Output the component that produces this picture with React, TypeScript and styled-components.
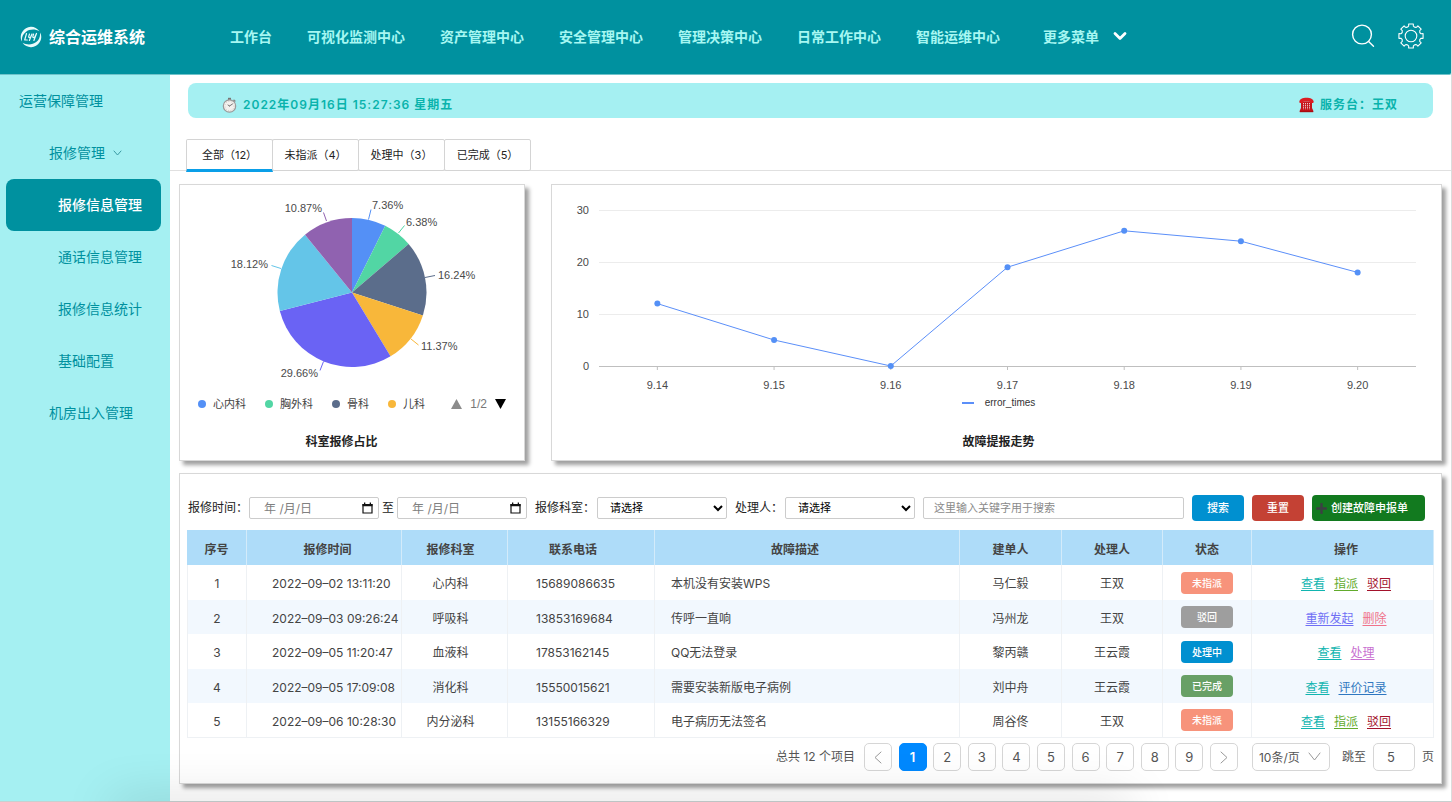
import React from 'react';
import styled, { createGlobalStyle, css } from 'styled-components';

const teal = '#00919f';
const aqua = '#a5f0f2';
const sans = 'Inter, "Noto Sans CJK SC", sans-serif';
const chartFont = '"Liberation Sans", "Noto Sans CJK SC", sans-serif';

const GlobalStyle = createGlobalStyle`
  *, *::before, *::after { box-sizing: border-box; }
  body { margin: 0; background: #fff; color: #333; font: 12px/18px ${sans}; }
  button, input, select { font-family: inherit; margin: 0; }
  ul { list-style: none; margin: 0; padding: 0; }
  a { color: inherit; text-decoration: none; }
`;

/* ---------- shell ---------- */

const Shell = styled.div`
  display: flex;
  flex-direction: column;
  min-height: 100vh;
  border-right: 1px solid #dcdcdc;
  border-bottom: 1px solid #c8d0d0;
`;

const Header = styled.header`
  display: flex;
  align-items: center;
  height: 75px;
  padding: 0 27px 0 20px;
  background: ${teal};
  border-bottom: 1px solid #6fc3ca;
  border-bottom-right-radius: 2px;
`;

const Brand = styled.a`
  display: flex;
  align-items: center;
  gap: 7px;
  width: 210px;
  flex: none;
  color: #fff;
  font-size: 16px;
  font-weight: 700;
  line-height: 24px;
`;

const Nav = styled.nav`
  display: flex;
  align-items: center;
  gap: 35px;
  flex: 1;
  font-size: 14px;
  font-weight: 700;
  line-height: 20px;
  color: #a6f7f2;
  white-space: nowrap;
`;

const MoreButton = styled.button`
  display: flex;
  align-items: center;
  gap: 13px;
  margin-left: 8px;
  padding: 0;
  border: 0;
  background: none;
  color: inherit;
  font-size: 14px;
  font-weight: 700;
  line-height: 20px;
`;

const HeaderTools = styled.div`
  display: flex;
  align-items: center;
  gap: 23px;
  padding-bottom: 3px;
`;

const IconButton = styled.button`
  display: flex;
  padding: 0;
  border: 0;
  background: none;
  color: #fff;
`;

const Body = styled.div`
  display: flex;
  flex: 1;
`;

const Sidebar = styled.aside`
  width: 170px;
  flex: none;
  background: ${aqua};
`;

const SideLink = styled.a<{ $indent: number; $active?: boolean }>`
  display: flex;
  align-items: center;
  gap: 8px;
  height: 52px;
  margin: 0 9px 0 6px;
  padding-left: ${p => p.$indent}px;
  border-radius: 8px;
  color: ${teal};
  font-size: 14px;
  line-height: 20px;
  ${p => p.$active && css`
    background: ${teal};
    color: #fff;
    font-weight: 500;
  `}
`;

const Main = styled.main`
  flex: 1;
  min-width: 0;
  padding: 8px 0 17px;
`;

/* ---------- notice strip and tabs ---------- */

const Notice = styled.div`
  display: flex;
  justify-content: space-between;
  align-items: center;
  height: 35px;
  margin: 0 18px;
  padding: 8px 35px 0 34px;
  border-radius: 8px;
  background: ${aqua};
  color: #0ab3ac;
  font-weight: 600;
  letter-spacing: 1px;
`;

const NoticeItem = styled.span`
  display: flex;
  align-items: center;
  gap: 6px;
`;

const Tabs = styled.div`
  display: flex;
  margin-top: 21px;
  padding-left: 16px;
  border-bottom: 1px solid #e0e0e0;
`;

const Tab = styled.button<{ $active?: boolean }>`
  width: 87px;
  height: 32px;
  margin: 0 -1px -1px 0;
  padding: 0 0 1px;
  border: 1px solid #d4d4d4;
  border-radius: 2px;
  background: #fff;
  color: #222;
  font-size: 11px;
  line-height: 16px;
  ${p => p.$active && css`
    border-bottom: 3px solid #0a9fe8;
    border-bottom-left-radius: 0;
    border-bottom-right-radius: 0;
    padding: 0;
    height: 33px;
    margin-bottom: -2px;
  `}
`;

/* ---------- cards ---------- */

const Card = styled.section`
  border: 1px solid #d8d8d8;
  background: #fff;
  box-shadow: 4px 4px 4px #a0a0a0;
`;

const ChartRow = styled.div`
  display: flex;
  gap: 26px;
  margin: 13px 9px 12px;
`;

const PieCard = styled(Card)`
  width: 346px;
  flex: none;
  padding-bottom: 9px;
`;

const TrendCard = styled(Card)`
  flex: 1;
  min-width: 0;
  padding-bottom: 9px;
`;

const Drawing = styled.svg`
  display: block;
  width: 100%;
  font-family: ${chartFont};
  font-size: 11px;
  fill: #4a4a4a;
`;

const PieLegend = styled.div`
  display: flex;
  align-items: center;
  justify-content: space-between;
  height: 26px;
  padding: 0 18px;
  font: 11px/16px ${chartFont};
  color: #444;
`;

const LegendKeys = styled.ul`
  display: flex;
  gap: 19px;
`;

const LegendKey = styled.li`
  display: flex;
  align-items: center;
  gap: 7px;
`;

const Dot = styled.i<{ $color: string }>`
  width: 8px;
  height: 8px;
  border-radius: 50%;
  background: ${p => p.$color};
`;

const LegendPager = styled.div`
  display: flex;
  align-items: center;
  gap: 8px;
  font-size: 12px;
  color: #777;
`;

const TrendLegend = styled.div`
  display: flex;
  align-items: center;
  justify-content: center;
  gap: 11px;
  height: 26px;
  padding: 0 0 3px 4px;
  font: 10px/16px ${chartFont};
  color: #333;
`;

const LineKey = styled.i`
  width: 12px;
  height: 2px;
  background: #5b8ff9;
`;

const ChartTitle = styled.h2<{ $before?: number; $after?: number }>`
  margin: 16px 0 0;
  padding-left: ${p => p.$before ?? 0}px;
  padding-right: ${p => p.$after ?? 0}px;
  text-align: center;
  font-size: 12px;
  font-weight: 700;
  line-height: 18px;
  color: #222;
`;

/* ---------- record list ---------- */

const ListCard = styled(Card)`
  margin: 0 9px;
  padding: 21px 7px 12px;
`;

const Filters = styled.form`
  display: flex;
  align-items: center;
  gap: 8px;
  margin-bottom: 9px;
  padding: 0 9px 0 1px;
`;

const Field = styled.div<{ $gap: number }>`
  display: flex;
  align-items: center;
  gap: ${p => p.$gap}px;
  white-space: nowrap;
  color: #222;
`;

const control = css`
  height: 22px;
  border: 1px solid #ccc;
  border-radius: 2px;
  background: #fff;
  font-size: 11px;
  &::placeholder { color: #8a8a8a; opacity: 1; }
`;

const DateBox = styled.span`
  ${control}
  display: flex;
  align-items: center;
  width: 130px;
  padding-right: 5px;
`;

const DateInput = styled.input`
  flex: 1;
  min-width: 0;
  height: 18px;
  padding: 0 0 0 14px;
  border: 0;
  outline: 0;
  background: none;
  font-size: 12px;
  &::placeholder { color: #808080; opacity: 1; }
`;

const SelectBox = styled.select`
  ${control}
  width: 130px;
  padding: 0 0 0 8px;
  color: #000;
`;

const Keyword = styled.input`
  ${control}
  flex: 1;
  min-width: 0;
  padding: 0 10px;
`;

const ActionButton = styled.button<{ $color: string; $wide?: boolean }>`
  display: flex;
  align-items: center;
  justify-content: ${p => (p.$wide ? 'flex-start' : 'center')};
  gap: 4px;
  width: ${p => (p.$wide ? 113 : 52)}px;
  height: 26px;
  padding: ${p => (p.$wide ? '0 0 0 4px' : '0')};
  flex: none;
  border: 0;
  border-radius: 4px;
  background: ${p => p.$color};
  color: #fff;
  font-size: 11px;
  font-weight: 500;
  line-height: 16px;
`;

const Table = styled.table`
  width: 100%;
  table-layout: fixed;
  border-collapse: separate;
  border-spacing: 0;
  color: #444;
`;

type CellProps = { $align?: 'left' | 'center'; $before?: number; $after?: number; $top?: number };

const cell = css<CellProps>`
  padding: ${p => p.$top ?? 3}px ${p => p.$after ?? 0}px 0 ${p => p.$before ?? 0}px;
  text-align: ${p => p.$align ?? 'center'};
  vertical-align: middle;
  white-space: nowrap;
  border-right: 1px solid #eef1f4;
`;

const Th = styled.th<CellProps>`
  ${cell}
  height: 35px;
  background: #aedcf9;
  border-right-color: #d3ebfa;
  font-weight: 700;
`;

const Td = styled.td<CellProps>`
  ${cell}
  &:first-child { border-left: 1px solid #eef1f4; }
`;

const Row = styled.tr`
  height: 35px;
  &:nth-child(even) { height: 34px; background: #f2f8fe; }
  &:last-child td { border-bottom: 1px solid #eef1f4; }
`;

const Badge = styled.span<{ $color: string }>`
  display: block;
  width: 52px;
  height: 22px;
  margin: 0 auto;
  border-radius: 4px;
  background: ${p => p.$color};
  color: #fff;
  font-size: 10px;
  font-weight: 500;
  line-height: 22px;
`;

const Links = styled.div`
  display: flex;
  justify-content: center;
  gap: 9px;
`;

const OpLink = styled.a<{ $color: string }>`
  color: ${p => p.$color};
  text-decoration: underline;
  text-underline-offset: 2px;
`;

const Pagination = styled.div`
  display: flex;
  align-items: center;
  justify-content: flex-end;
  gap: 7px;
  margin-top: 5px;
  color: #555;
`;

const Total = styled.span`
  margin-right: 2px;
`;

const PageList = styled.ul`
  display: flex;
  justify-content: space-between;
  width: 374px;
`;

const PageButton = styled.button<{ $current?: boolean }>`
  display: flex;
  align-items: center;
  justify-content: center;
  width: 28px;
  height: 28px;
  padding: 0;
  border: 1px solid ${p => (p.$current ? '#0089ff' : '#d6d6d6')};
  border-radius: 5px;
  background: ${p => (p.$current ? '#0089ff' : '#fff')};
  color: ${p => (p.$current ? '#fff' : '#555')};
  font-size: 13px;
  font-weight: ${p => (p.$current ? 600 : 400)};
`;

const PageSize = styled.span`
  position: relative;
  display: flex;
  margin: 0 5px 0 7px;
  svg { position: absolute; right: 9px; top: 9px; pointer-events: none; }
`;

const PageSizeSelect = styled.select`
  appearance: none;
  width: 78px;
  height: 28px;
  padding: 0 6px;
  border: 1px solid #d6d6d6;
  border-radius: 5px;
  background: #fff;
  color: #555;
  font-size: 12px;
`;

const PageInput = styled.input`
  width: 42px;
  height: 28px;
  padding: 0 6px 0 0;
  border: 1px solid #d6d6d6;
  border-radius: 5px;
  color: #555;
  font-size: 13px;
  text-align: center;
`;

const BottomShade = styled.div`
  position: fixed;
  left: 110px;
  right: 320px;
  bottom: -20px;
  height: 20px;
  pointer-events: none;
  box-shadow: 0 0 50px rgba(0, 0, 0, 0.2);
`;

/* ---------- icons ---------- */

const Logo = () => (
  <svg width="22" height="22" viewBox="0 0 22 22" fill="none" aria-hidden="true">
    <path d="M19.5 5.2A10.2 10.2 0 0 0 2.4 5.8C.2 9 .3 13 2 15.6c-.4-3.9.6-7.4 3.8-9.7C9.5 3.1 15 2.8 19.5 5.2z" fill="#e9fbfb" />
    <path d="M2.5 16.8a10.2 10.2 0 0 0 17.1-.6c2.2-3.2 2.1-7.2.4-9.8.4 3.9-.6 7.4-3.8 9.7-3.7 2.8-9.2 3.1-13.7.7z" fill="#e9fbfb" />
    <path d="M6.5 7.500L4.7 14h2.600M9.500 8l-.8 2.600c-.2 1.300 1.400 1.200 2 .2L12 8l-2.600 6.500M13.600 8l-.8 2.600c-.2 1.300 1.400 1.200 2 .2L16.500 7.500l-2.600 7" stroke="#e9fbfb" strokeWidth="1.2" strokeLinecap="round" strokeLinejoin="round" />
  </svg>
);

const SearchIcon = () => (
  <svg width="24" height="24" viewBox="0 0 24 24" fill="none" stroke="currentColor" strokeWidth="1.4" strokeLinecap="round" aria-hidden="true">
    <circle cx="11" cy="10.5" r="9.4" />
    <path d="M17.6 17.4L22.5 22.300" />
  </svg>
);

const gearPath = (() => {
  const at = (deg: number, r: number) => {
    const a = (deg * Math.PI) / 180;
    return `${(13 + r * Math.sin(a)).toFixed(2)} ${(13 - r * Math.cos(a)).toFixed(2)}`;
  };
  let d = '';
  for (let k = 0; k < 8; k++) {
    const a = k * 45;
    d += `${k ? 'L' : 'M'}${at(a - 11, 12.3)} L${at(a + 11, 12.3)} L${at(a + 13, 10.3)} Q${at(a + 22.5, 8.9)} ${at(a + 32, 10.3)} `;
  }
  return d + 'Z';
})();

const GearIcon = () => (
  <svg width="26" height="26" viewBox="0 0 26 26" fill="none" stroke="currentColor" strokeWidth="1.1" strokeLinejoin="round" aria-hidden="true">
    <path d={gearPath} />
    <circle cx="13" cy="13" r="5.8" />
  </svg>
);

const MenuArrow = () => (
  <svg width="16" height="12" viewBox="0 0 16 12" fill="none" aria-hidden="true">
    <path d="M3 2.500L8 7.500L13 2.500" stroke="#fff" strokeWidth="2.8" strokeLinecap="round" strokeLinejoin="round" />
  </svg>
);

const chevronShape = {
  down: (w: number, h: number) => `M1 1L${w / 2} ${h - 1}L${w - 1} 1`,
  left: (w: number, h: number) => `M${w - 1} 1L1 ${h / 2}L${w - 1} ${h - 1}`,
  right: (w: number, h: number) => `M1 1L${w - 1} ${h / 2}L1 ${h - 1}`,
};

const Chevron = ({ dir = 'down', w, h, color = '#999' }: { dir?: keyof typeof chevronShape; w: number; h: number; color?: string }) => (
  <svg width={w} height={h} viewBox={`0 0 ${w} ${h}`} fill="none" aria-hidden="true">
    <path d={chevronShape[dir](w, h)} stroke={color} strokeLinecap="round" strokeLinejoin="round" />
  </svg>
);

const StopwatchIcon = () => (
  <svg width="15" height="16" viewBox="0 0 15 16" aria-hidden="true">
    <path d="M6 .8h3v2.500H6z" fill="#777" />
    <path d="M12 2.300l1.800 1.800-1.200 1.200L11 3.500z" fill="#888" />
    <circle cx="7.5" cy="9" r="6.2" fill="#f3f1ee" stroke="#9a9a9a" strokeWidth="1.2" />
    <circle cx="7.5" cy="9" r="4.6" fill="none" stroke="#cfcac4" strokeWidth="1" strokeDasharray="1 1.5" />
    <path d="M7.500 9l3-2M7.500 9L6 8" stroke="#777" strokeWidth="1" strokeLinecap="round" />
  </svg>
);

const PhoneIcon = () => (
  <svg width="15" height="16" viewBox="0 0 15 16" aria-hidden="true">
    <path d="M2 5h11v6l1.200 2.500V15H.8v-1.500L2 11z" fill="#c4151b" />
    <path d="M.3 4.800C.6 2 3.500.8 7.500.8s6.900 1.200 7.200 4c0 .8-.5 1.200-1.300 1.200h-1.700c-.8 0-1.200-.4-1.200-1.200H4.500C4.500 5.600 4.100 6 3.300 6H1.600C.8 6 .3 5.600.3 4.800z" fill="#dc1c22" />
    <path d="M4.500 6v6.500M6.500 6v6.500M8.500 6v6.500M10.500 6v6.500" stroke="#efc9ca" strokeWidth="1" strokeDasharray="1.300 .8" />
    <path d="M.8 13.800h13.400v1.400H.8z" fill="#a80d12" />
  </svg>
);

const CalendarIcon = () => (
  <svg width="11" height="12" viewBox="0 0 11 12" aria-hidden="true">
    <path d="M1 2.500h9v8.500H1z" fill="none" stroke="#111" strokeWidth="1.2" />
    <path d="M.5 2h10v2.300H.5zM2 .5h1.300V2H2zM7.700.5H9V2H7.700z" fill="#111" />
  </svg>
);

const PlusIcon = () => (
  <svg width="11" height="11" viewBox="0 0 11 11" aria-hidden="true">
    <path d="M5.500 1v9M1 5.500h9" stroke="#3c4043" strokeWidth="2.4" strokeLinecap="round" />
  </svg>
);

/* ---------- charts ---------- */

const slices = [
  { value: 7.36, color: '#5490f6', x: 192, y: 24, anchor: 'start', line: '188.5,34.5 191,24.5' },
  { value: 6.38, color: '#52d6a4', x: 226, y: 41, anchor: 'start', line: '218.5,48 224.5,40.5' },
  { value: 16.24, color: '#5b6d8b', x: 258, y: 94, anchor: 'start', line: '245,92.5 255,90.5' },
  { value: 11.37, color: '#f8b73a', x: 241, y: 165, anchor: 'start', line: '231,154 238.5,160' },
  { value: 29.66, color: '#6a63f4', x: 138, y: 192, anchor: 'end', line: '143.5,176.5 140,185.5' },
  { value: 18.12, color: '#64c5e8', x: 88, y: 83, anchor: 'end', line: '101,83.5 91.5,80.5' },
  { value: 10.87, color: '#9062b0', x: 142, y: 27, anchor: 'end', line: '146.5,36 143.5,27.5' },
] as const;

const PieChart = () => {
  const cx = 172;
  const cy = 107.5;
  const r = 74.5;
  let sum = 0;
  const point = (v: number) => {
    const a = (v / 100) * 2 * Math.PI;
    return `${(cx + r * Math.sin(a)).toFixed(2)} ${(cy - r * Math.cos(a)).toFixed(2)}`;
  };
  return (
    <Drawing viewBox="0 0 344 206" role="img" aria-label="科室报修占比">
      {slices.map(s => {
        const from = point(sum);
        sum += s.value;
        return (
          <g key={s.value}>
            <path d={`M${cx} ${cy} L${from} A${r} ${r} 0 0 1 ${point(sum)} Z`} fill={s.color} />
            <polyline points={s.line} stroke={s.color} fill="none" />
            <text x={s.x} y={s.y} textAnchor={s.anchor}>{s.value}%</text>
          </g>
        );
      })}
    </Drawing>
  );
};

const trend = [
  ['9.14', 12], ['9.15', 5], ['9.16', 0], ['9.17', 19], ['9.18', 26], ['9.19', 24], ['9.20', 18],
] as const;

const TrendChart = () => {
  const left = 47;
  const right = 864;
  const step = (right - left) / trend.length;
  const px = (i: number) => left + step * (i + 0.5);
  const py = (v: number) => 181 - v * 5.2;
  return (
    <Drawing viewBox="0 0 889 206" role="img" aria-label="故障提报走势">
      {[30, 20, 10, 0].map(v => (
        <g key={v}>
          <line x1={left} x2={right} y1={py(v) + 0.5} y2={py(v) + 0.5} stroke={v ? '#ececec' : '#bfbfbf'} />
          <text x="37" y={py(v) + 4} textAnchor="end">{v}</text>
        </g>
      ))}
      {trend.map(([day], i) => (
        <g key={day}>
          <line x1={px(i)} x2={px(i)} y1="181" y2="185" stroke="#bfbfbf" />
          <text x={px(i)} y="204" textAnchor="middle">{day}</text>
        </g>
      ))}
      <polyline points={trend.map(([, v], i) => `${px(i)},${py(v)}`).join(' ')} fill="none" stroke="#5b8ff9" />
      {trend.map(([day, v], i) => (
        <circle key={day} cx={px(i)} cy={py(v)} r="3" fill="#5490f6" />
      ))}
    </Drawing>
  );
};

/* ---------- data ---------- */

const navItems = ['工作台', '可视化监测中心', '资产管理中心', '安全管理中心', '管理决策中心', '日常工作中心', '智能运维中心'];

const legend = [
  ['心内科', '#5490f6'], ['胸外科', '#52d6a4'], ['骨科', '#5b6d8b'], ['儿科', '#f8b73a'],
] as const;

const columns = [
  { name: '序号', width: 60 },
  { name: '报修时间', width: 155, before: 7 },
  { name: '报修科室', width: 106, after: 8 },
  { name: '联系电话', width: 147, after: 16 },
  { name: '故障描述', after: 24 },
  { name: '建单人', width: 102 },
  { name: '处理人', width: 101 },
  { name: '状态', width: 89 },
  { name: '操作', width: 182, before: 7 },
] as { name: string; width?: number; before?: number; after?: number }[];

const statusColor: Record<string, string> = {
  未指派: '#f7937b', 驳回: '#9e9e9e', 处理中: '#0090d0', 已完成: '#68a066',
};

const opColor: Record<string, string> = {
  查看: '#11b5b0', 指派: '#62ab2c', 驳回: '#a3122b', 重新发起: '#6f6ff5', 删除: '#f0728a', 处理: '#c86fd0', 评价记录: '#2f77c0',
};

const records = [
  ['2022–09–02 13:11:20', '心内科', '15689086635', '本机没有安装WPS', '马仁毅', '王双', '未指派', '查看 指派 驳回'],
  ['2022–09–03 09:26:24', '呼吸科', '13853169684', '传呼一直响', '冯州龙', '王双', '驳回', '重新发起 删除'],
  ['2022–09–05 11:20:47', '血液科', '17853162145', 'QQ无法登录', '黎丙赣', '王云霞', '处理中', '查看 处理'],
  ['2022–09–05 17:09:08', '消化科', '15550015621', '需要安装新版电子病例', '刘中舟', '王云霞', '已完成', '查看 评价记录'],
  ['2022–09–06 10:28:30', '内分泌科', '13155166329', '电子病历无法签名', '周谷佟', '王双', '未指派', '查看 指派 驳回'],
];

export default function App() {
  return (
    <>
      <GlobalStyle />
      <Shell>
        <Header>
          <Brand href="#"><Logo />综合运维系统</Brand>
          <Nav>
            {navItems.map(n => <a key={n} href="#">{n}</a>)}
            <MoreButton type="button">更多菜单<MenuArrow /></MoreButton>
          </Nav>
          <HeaderTools>
            <IconButton type="button" aria-label="搜索"><SearchIcon /></IconButton>
            <IconButton type="button" aria-label="设置"><GearIcon /></IconButton>
          </HeaderTools>
        </Header>
        <Body>
          <Sidebar>
            <SideLink href="#" $indent={13}>运营保障管理</SideLink>
            <SideLink href="#" $indent={43}>报修管理<Chevron w={9} h={6} color="#3a9aa3" /></SideLink>
            <SideLink href="#" $indent={52} $active>报修信息管理</SideLink>
            <SideLink href="#" $indent={52}>通话信息管理</SideLink>
            <SideLink href="#" $indent={52}>报修信息统计</SideLink>
            <SideLink href="#" $indent={52}>基础配置</SideLink>
            <SideLink href="#" $indent={43}>机房出入管理</SideLink>
          </Sidebar>
          <Main>
            <Notice>
              <NoticeItem><StopwatchIcon />2022年09月16日 15:27:36 星期五</NoticeItem>
              <NoticeItem><PhoneIcon />服务台：王双</NoticeItem>
            </Notice>
            <Tabs>
              <Tab type="button" $active>全部（12）</Tab>
              <Tab type="button">未指派（4）</Tab>
              <Tab type="button">处理中（3）</Tab>
              <Tab type="button">已完成（5）</Tab>
            </Tabs>
            <ChartRow>
              <PieCard>
                <PieChart />
                <PieLegend>
                  <LegendKeys>
                    {legend.map(([name, color]) => <LegendKey key={name}><Dot $color={color} />{name}</LegendKey>)}
                  </LegendKeys>
                  <LegendPager>
                    <svg width="11" height="10" viewBox="0 0 11 10" aria-hidden="true"><path d="M5.500 0L11 10H0z" fill="#8c8c8c" /></svg>
                    1/2
                    <svg width="11" height="10" viewBox="0 0 11 10" aria-hidden="true"><path d="M0 0h11L5.500 10z" fill="#000" /></svg>
                  </LegendPager>
                </PieLegend>
                <ChartTitle $after={21}>科室报修占比</ChartTitle>
              </PieCard>
              <TrendCard>
                <TrendChart />
                <TrendLegend><LineKey />error_times</TrendLegend>
                <ChartTitle $before={4}>故障提报走势</ChartTitle>
              </TrendCard>
            </ChartRow>
            <ListCard>
              <Filters onSubmit={e => e.preventDefault()}>
                <Field $gap={3}>
                  <Field $gap={1}>
                    <label htmlFor="from">报修时间：</label>
                    <DateBox><DateInput id="from" placeholder="年 /月/日" /><CalendarIcon /></DateBox>
                  </Field>
                  <label htmlFor="to">至</label>
                  <DateBox><DateInput id="to" placeholder="年 /月/日" /><CalendarIcon /></DateBox>
                </Field>
                <Field $gap={2}>
                  <label htmlFor="dept">报修科室：</label>
                  <SelectBox id="dept"><option>请选择</option></SelectBox>
                </Field>
                <Field $gap={2}>
                  <label htmlFor="handler">处理人：</label>
                  <SelectBox id="handler"><option>请选择</option></SelectBox>
                </Field>
                <Keyword aria-label="关键字" placeholder="这里输入关键字用于搜索" />
                <ActionButton $color="#0090d0">搜索</ActionButton>
                <ActionButton type="reset" $color="#c44134">重置</ActionButton>
                <ActionButton type="button" $color="#127a1f" $wide><PlusIcon />创建故障申报单</ActionButton>
              </Filters>
              <Table>
                <colgroup>
                  {columns.map(c => <col key={c.name} width={c.width} />)}
                </colgroup>
                <thead>
                  <tr>
                    {columns.map(c => <Th key={c.name} $top={5} $before={c.before} $after={c.after}>{c.name}</Th>)}
                  </tr>
                </thead>
                <tbody>
                  {records.map(([time, dept, phone, text, creator, handler, status, ops], i) => (
                    <Row key={time}>
                      <Td>{i + 1}</Td>
                      <Td $align="left" $before={25}>{time}</Td>
                      <Td $after={8}>{dept}</Td>
                      <Td $align="left" $before={28}>{phone}</Td>
                      <Td $align="left" $before={16}>{text}</Td>
                      <Td>{creator}</Td>
                      <Td>{handler}</Td>
                      <Td $top={0}><Badge $color={statusColor[status]}>{status}</Badge></Td>
                      <Td $before={7}>
                        <Links>
                          {ops.split(' ').map(op => <OpLink key={op} href="#" $color={opColor[op]}>{op}</OpLink>)}
                        </Links>
                      </Td>
                    </Row>
                  ))}
                </tbody>
              </Table>
              <Pagination>
                <Total>总共 12 个项目</Total>
                <PageList>
                  <li><PageButton type="button" aria-label="上一页"><Chevron dir="left" w={8} h={13} /></PageButton></li>
                  {[1, 2, 3, 4, 5, 6, 7, 8, 9].map(n => (
                    <li key={n}><PageButton type="button" $current={n === 1}>{n}</PageButton></li>
                  ))}
                  <li><PageButton type="button" aria-label="下一页"><Chevron dir="right" w={8} h={13} /></PageButton></li>
                </PageList>
                <PageSize>
                  <PageSizeSelect aria-label="每页条数"><option>10条/页</option></PageSizeSelect>
                  <Chevron w={13} h={9} />
                </PageSize>
                <label htmlFor="jump">跳至</label>
                <PageInput id="jump" defaultValue="5" />
                <span>页</span>
              </Pagination>
            </ListCard>
          </Main>
        </Body>
      </Shell>
      <BottomShade />
    </>
  );
}
